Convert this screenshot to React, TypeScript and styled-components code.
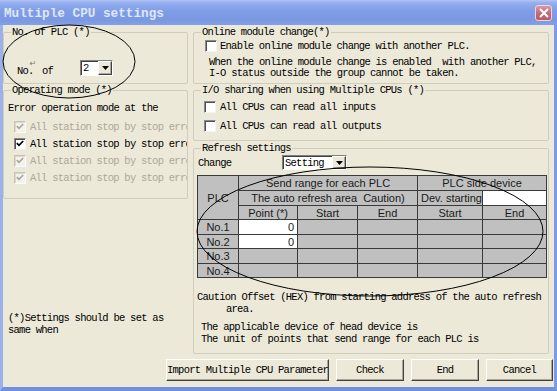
import styled, { createGlobalStyle } from 'styled-components'

const MONO = `'Liberation Mono', 'DejaVu Sans Mono', monospace`
const SANS = `'Liberation Sans', Arial, sans-serif`

const GlobalStyle = createGlobalStyle`
  html, body { margin: 0; padding: 0; background: #ece9d8; }
  #root { width: 557px; height: 391px; }
`

// ── window chrome ─────────────────────────────────────────────

const Window = styled.div`
  position: relative;
  width: 557px;
  height: 391px;
  display: flex;
  flex-direction: column;
  overflow: hidden;
  font-family: ${MONO};
  font-size: 10.5px;
  letter-spacing: -0.75px;
  color: #000;
`

const TitleBar = styled.div`
  flex: none;
  height: 25px;
  display: flex;
  align-items: center;
  justify-content: space-between;
  padding: 0 5px 0 4px;
  background: linear-gradient(#b2c5f4 0%, #93aef0 12%, #7f9de6 45%, #7a98e3 80%, #839fe6 100%);
`

const Title = styled.span`
  font-size: 12.7px;
  font-weight: bold;
  letter-spacing: 0;
  color: #dfe7f9;
  padding-top: 2px;
`

const CloseButton = styled.span`
  width: 17px;
  height: 16px;
  box-sizing: border-box;
  margin-top: 1px;
  border: 1px solid #efd3d9;
  border-radius: 3px;
  background: linear-gradient(#d99aa5, #c46a79 50%, #b95a69);
  display: inline-flex;
  align-items: center;
  justify-content: center;
`

const Frame = styled.div`
  flex: 1;
  display: flex;
  flex-direction: column;
  background: #ece9d8;
  border-left: 3px solid #9ab1ec;
  border-right: 3px solid #7f9ae4;
  border-bottom: 4px solid #7290e0;
  padding: 1px 1px 6px 0;
`

const Columns = styled.div`
  display: grid;
  grid-template-columns: 185px 356px;
  column-gap: 5px;
  height: 328px;
`

const Column = styled.div`
  display: flex;
  flex-direction: column;
  min-width: 0;
`

// ── group boxes ───────────────────────────────────────────────

const Group = styled.fieldset<{ $h: number; $mt?: number }>`
  margin: ${({ $mt }) => $mt ?? 0}px 0 0 0;
  padding: 0;
  min-width: 0;
  height: ${({ $h }) => $h}px;
  box-sizing: border-box;
  border: 1px solid #d0cdbd;
  border-radius: 2px;
`

const Legend = styled.legend`
  margin-left: 7px;
  padding: 0 1px;
  height: 12px;
  line-height: 12px;
`

const Line = styled.div<{ $pl?: number; $mt?: number; $lh?: number; $muted?: boolean }>`
  padding-left: ${({ $pl }) => $pl ?? 0}px;
  margin-top: ${({ $mt }) => $mt ?? 0}px;
  line-height: ${({ $lh }) => $lh ?? 12}px;
  white-space: pre;
  overflow: hidden;
  color: ${({ $muted }) => ($muted ? '#aca899' : '#000')};
`

const CheckRow = styled.label<{ $h: number; $pl: number; $gap?: number; $muted?: boolean }>`
  display: flex;
  align-items: center;
  gap: ${({ $gap }) => $gap ?? 4}px;
  height: ${({ $h }) => $h}px;
  padding-left: ${({ $pl }) => $pl}px;
  white-space: pre;
  overflow: hidden;
  color: ${({ $muted }) => ($muted ? '#aca899' : '#000')};
`

const Box = styled.span<{ $disabled?: boolean }>`
  flex: none;
  width: 12px;
  height: 12px;
  box-sizing: border-box;
  display: inline-flex;
  align-items: center;
  justify-content: center;
  background: ${({ $disabled }) => ($disabled ? '#f3f2ec' : '#fff')};
  border: 1px solid;
  border-color: ${({ $disabled }) =>
    $disabled ? '#c6c3b4 #fbfbf8 #fbfbf8 #c6c3b4' : '#8a8a8a #f4f4f4 #f4f4f4 #8a8a8a'};
  box-shadow: ${({ $disabled }) =>
    $disabled ? 'inset 1px 1px 0 #dddacb' : 'inset 1px 1px 0 #505050'};
`

const InlineRow = styled.div<{ $h: number; $pt: number; $pl: number }>`
  display: flex;
  align-items: center;
  height: ${({ $h }) => $h}px;
  margin-top: ${({ $pt }) => $pt}px;
  padding-left: ${({ $pl }) => $pl}px;
`

const FieldLabel = styled.span<{ $w: number }>`
  flex: none;
  width: ${({ $w }) => $w}px;
  white-space: pre;
`

const Return = styled.span`
  display: inline-block;
  margin-left: -4px;
  font-family: 'DejaVu Sans', sans-serif;
  font-size: 8px;
  letter-spacing: 0;
  color: #777;
  vertical-align: 8px;
`

const Combo = styled.div<{ $w: number; $h: number }>`
  flex: none;
  display: flex;
  width: ${({ $w }) => $w}px;
  height: ${({ $h }) => $h}px;
  box-sizing: border-box;
  background: #fff;
  border: 1px solid;
  border-color: #808080 #fff #fff #808080;
  box-shadow: inset 1px 1px 0 #404040;
`

const ComboText = styled.span`
  flex: 1;
  padding-left: 2px;
  display: flex;
  align-items: center;
`

const ComboButton = styled.span`
  flex: none;
  width: 14px;
  box-sizing: border-box;
  background: #ece9d8;
  border: 1px solid;
  border-color: #fff #404040 #404040 #fff;
  box-shadow: inset -1px -1px 0 #aca899;
  display: flex;
  align-items: center;
  justify-content: center;
`

const Footnote = styled.div`
  margin-top: auto;
  margin-bottom: 18px;
  padding-left: 5px;
  line-height: 12px;
  white-space: pre;
`

// ── refresh table ─────────────────────────────────────────────

const RefreshTable = styled.table`
  margin: 5px 0 0 3px;
  width: 349px;
  border-collapse: collapse;
  table-layout: fixed;
  font-family: ${SANS};
  font-size: 11px;
  letter-spacing: 0;
  color: #1a1a1a;
  background: #c0c0c0;
  border: 1px solid #3a3a3a;
`

const Row = styled.tr<{ $h: number }>`
  height: ${({ $h }) => $h}px;
`

const Cell = styled.td<{ $white?: boolean; $right?: boolean }>`
  border: 1px solid #3a3a3a;
  padding: 0 3px;
  line-height: 12px;
  text-align: ${({ $right }) => ($right ? 'right' : 'center')};
  background: ${({ $white }) => ($white ? '#fff' : 'transparent')};
  white-space: pre;
  overflow: hidden;
`

// ── buttons ───────────────────────────────────────────────────

const ButtonRow = styled.div`
  display: flex;
  justify-content: flex-end;
  gap: 7px;
  margin-top: 5px;
`

const Button = styled.button<{ $w: number }>`
  width: ${({ $w }) => $w}px;
  height: 22px;
  padding: 0;
  font: inherit;
  letter-spacing: inherit;
  color: #000;
  background: #ece9d8;
  border: 1px solid;
  border-color: #fff #404040 #404040 #fff;
  box-shadow: inset -1px -1px 0 #aca899;
`

const Marks = styled.svg`
  position: absolute;
  left: 0;
  top: 0;
  pointer-events: none;
`

function Check({ disabled }: { disabled?: boolean }) {
  return (
    <svg width="8" height="7" viewBox="0 0 8 7">
      <polyline
        points="0.8,3.2 3,5.4 7.2,1"
        fill="none"
        stroke={disabled ? '#aca899' : '#000'}
        strokeWidth="1.7"
      />
    </svg>
  )
}

function Arrow() {
  return (
    <svg width="7" height="4" viewBox="0 0 7 4">
      <polygon points="0,0 7,0 3.5,4" fill="#000" />
    </svg>
  )
}

const STOP_ROWS = [true, false, true, true]

const DATA_ROWS = [
  { plc: 'No.1', point: '0' },
  { plc: 'No.2', point: '0' },
  { plc: 'No.3', point: null },
  { plc: 'No.4', point: null },
]

export default function App() {
  return (
    <Window>
      <GlobalStyle />
      <TitleBar>
        <Title>Multiple CPU settings</Title>
        <CloseButton>
          <svg width="10" height="10" viewBox="0 0 10 10">
            <path d="M1 1 L9 9 M9 1 L1 9" stroke="#fff" strokeWidth="2" />
          </svg>
        </CloseButton>
      </TitleBar>

      <Frame>
        <Columns>
          <Column>
            <Group $h={58}>
              <Legend>No. of PLC (*)</Legend>
              <InlineRow $h={16} $pt={22} $pl={13}>
                <FieldLabel $w={63}>
                  No.<Return>↵</Return> of
                </FieldLabel>
                <Combo $w={33} $h={16}>
                  <ComboText>2</ComboText>
                  <ComboButton>
                    <Arrow />
                  </ComboButton>
                </Combo>
              </InlineRow>
            </Group>

            <Group $h={115}>
              <Legend>Operating mode (*)</Legend>
              <Line $pl={4} $mt={6}>Error operation mode at the</Line>
              <div style={{ marginTop: 4 }}>
                {STOP_ROWS.map((disabled, i) => (
                  <CheckRow key={i} $h={17} $pl={10} $muted={disabled}>
                    <Box $disabled={disabled}>
                      <Check disabled={disabled} />
                    </Box>
                    All station stop by stop error
                  </CheckRow>
                ))}
              </div>
            </Group>

            <Footnote>{'(*)Settings should be set as\nsame when'}</Footnote>
          </Column>

          <Column>
            <Group $h={58}>
              <Legend>Online module change(*)</Legend>
              <CheckRow $h={14} $pl={11} $gap={3} style={{ marginTop: 1 }}>
                <Box />
                Enable online module change with another PLC.
              </CheckRow>
              <Line $pl={15} $mt={4} $lh={11}>
                {'When the online module change is enabled  with another PLC,\nI-O status outside the group cannot be taken.'}
              </Line>
            </Group>

            <Group $h={57}>
              <Legend>I/O sharing when using Multiple CPUs (*)</Legend>
              <div style={{ marginTop: 1 }}>
                <CheckRow $h={19} $pl={10}>
                  <Box />
                  All CPUs can read all inputs
                </CheckRow>
                <CheckRow $h={19} $pl={10}>
                  <Box />
                  All CPUs can read all outputs
                </CheckRow>
              </div>
            </Group>

            <Group $h={212} $mt={1}>
              <Legend>Refresh settings</Legend>
              <InlineRow $h={15} $pt={1} $pl={4}>
                <FieldLabel $w={84}>Change</FieldLabel>
                <Combo $w={65} $h={15}>
                  <ComboText>Setting</ComboText>
                  <ComboButton>
                    <Arrow />
                  </ComboButton>
                </Combo>
              </InlineRow>

              <RefreshTable>
                <colgroup>
                  <col style={{ width: 41 }} />
                  <col style={{ width: 59 }} />
                  <col style={{ width: 60 }} />
                  <col style={{ width: 60 }} />
                  <col style={{ width: 65 }} />
                  <col style={{ width: 64 }} />
                </colgroup>
                <tbody>
                  <Row $h={15}>
                    <Cell rowSpan={3}>PLC</Cell>
                    <Cell colSpan={3}>Send range for each PLC</Cell>
                    <Cell colSpan={2}>PLC side device</Cell>
                  </Row>
                  <Row $h={15}>
                    <Cell colSpan={3}>The auto refresh area  Caution)</Cell>
                    <Cell>Dev. starting</Cell>
                    <Cell $white />
                  </Row>
                  <Row $h={14}>
                    <Cell>Point (*)</Cell>
                    <Cell>Start</Cell>
                    <Cell>End</Cell>
                    <Cell>Start</Cell>
                    <Cell>End</Cell>
                  </Row>
                  {DATA_ROWS.map((r, i) => (
                    <Row key={r.plc} $h={i % 2 === 0 ? 15 : 14}>
                      <Cell>{r.plc}</Cell>
                      <Cell $white={r.point !== null} $right>
                        {r.point ?? ''}
                      </Cell>
                      <Cell />
                      <Cell />
                      <Cell />
                      <Cell />
                    </Row>
                  ))}
                </tbody>
              </RefreshTable>

              <Line $pl={3} $mt={13}>Caution Offset (HEX) from starting address of the auto refresh</Line>
              <Line $pl={32}>area.</Line>
              <Line $pl={7} $mt={6}>The applicable device of head device is</Line>
              <Line $pl={7} $lh={13}>The unit of points that send range for each PLC is</Line>
            </Group>
          </Column>
        </Columns>

        <ButtonRow>
          <Button $w={163}>Import Multiple CPU Parameter</Button>
          <Button $w={68}>Check</Button>
          <Button $w={68}>End</Button>
          <Button $w={67}>Cancel</Button>
        </ButtonRow>
      </Frame>

      <Marks width="557" height="391" viewBox="0 0 557 391">
        <ellipse cx="69" cy="61.5" rx="66" ry="36.5" fill="none" stroke="#000" strokeWidth="1" />
        <ellipse cx="370" cy="231.5" rx="173" ry="64.5" fill="none" stroke="#000" strokeWidth="1" />
      </Marks>
    </Window>
  )
}
